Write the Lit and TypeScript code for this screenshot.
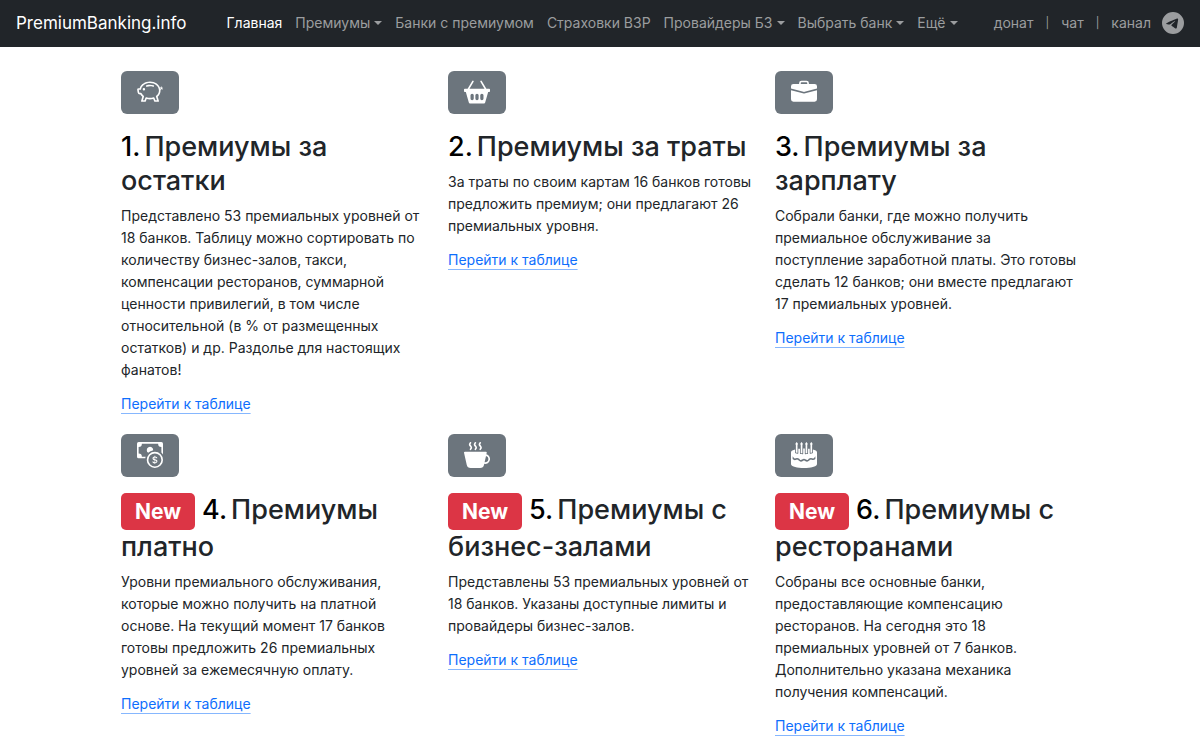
import { LitElement, html, css, svg } from "lit";
import { customElement, property } from "lit/decorators.js";

const steam =
  "m4.4.8-.003.004-.014.019a4.167 4.167 0 0 0-.204.31 2.327 2.327 0 0 0-.141.267c-.026.06-.034.092-.037.103v.004a.593.593 0 0 0 .091.248c.075.133.178.272.308.445l.01.012c.118.158.26.347.37.543.112.2.22.455.22.745 0 .188-.065.368-.119.494a3.31 3.31 0 0 1-.202.388 5.444 5.444 0 0 1-.253.382l-.018.025-.005.008-.002.002A.5.5 0 0 1 3.6 4.2l.003-.004.014-.019a4.149 4.149 0 0 0 .204-.31 2.06 2.06 0 0 0 .141-.267c.026-.06.034-.092.037-.103a.593.593 0 0 0-.09-.252A4.334 4.334 0 0 0 3.6 2.8l-.01-.012a5.099 5.099 0 0 1-.37-.543A1.53 1.53 0 0 1 3 1.5c0-.188.065-.368.119-.494.059-.138.134-.274.202-.388a5.446 5.446 0 0 1 .253-.382l.025-.035A.5.5 0 0 1 4.4.8Z";

const icons = {
  piggy: svg`
    <path d="M5 6.25a.75.75 0 1 1-1.5 0 .75.75 0 0 1 1.5 0zm1.138-1.496A6.613 6.613 0 0 1 7.964 4.5c.666 0 1.303.097 1.893.273a.5.5 0 0 0 .286-.958A7.602 7.602 0 0 0 7.964 3.5c-.734 0-1.441.103-2.102.292a.5.5 0 1 0 .276.962z"/>
    <path fill-rule="evenodd" d="M7.964 1.527c-2.977 0-5.571 1.704-6.32 4.125h-.55A1 1 0 0 0 .11 6.824l.254 1.46a1.5 1.5 0 0 0 1.478 1.243h.263c.3.513.688.978 1.145 1.382l-.729 2.477a.5.5 0 0 0 .48.641h2a.5.5 0 0 0 .471-.332l.482-1.351c.635.173 1.31.267 2.011.267.707 0 1.388-.095 2.028-.272l.543 1.372a.5.5 0 0 0 .465.316h2a.5.5 0 0 0 .478-.645l-.761-2.506C13.81 9.895 14.5 8.559 14.5 7.069c0-.145-.007-.29-.02-.431.261-.11.508-.266.705-.444.315.306.815.306.815-.417 0 .223-.5.223-.461-.026a.95.95 0 0 0 .09-.255.7.7 0 0 0-.202-.645.58.58 0 0 0-.707-.098.735.735 0 0 0-.375.562c-.024.243.082.48.32.654a2.112 2.112 0 0 1-.259.153c-.534-2.664-3.284-4.595-6.442-4.595zM2.516 6.26c.455-2.066 2.667-3.733 5.448-3.733 3.146 0 5.536 2.114 5.536 4.542 0 1.254-.624 2.41-1.67 3.248a.5.5 0 0 0-.165.535l.66 2.175h-.985l-.59-1.487a.5.5 0 0 0-.629-.288c-.661.23-1.39.359-2.157.359a6.558 6.558 0 0 1-2.157-.359.5.5 0 0 0-.635.304l-.525 1.471h-.979l.633-2.15a.5.5 0 0 0-.17-.534 4.649 4.649 0 0 1-1.284-1.541.5.5 0 0 0-.446-.275h-.56a.5.5 0 0 1-.492-.414l-.254-1.46h.933a.5.5 0 0 0 .488-.393zm12.621-.857a.565.565 0 0 1-.098.21.704.704 0 0 1-.044-.025c-.146-.09-.157-.175-.152-.223a.236.236 0 0 1 .117-.173c.049-.027.08-.021.113.012a.202.202 0 0 1 .064.199z"/>`,
  basket: svg`
    <path d="M5.929 1.757a.5.5 0 1 0-.858-.514L2.217 6H.5a.5.5 0 0 0-.5.5v1a.5.5 0 0 0 .5.5h.623l1.844 6.456A.75.75 0 0 0 3.69 15h8.622a.75.75 0 0 0 .722-.544L14.877 8h.623a.5.5 0 0 0 .5-.5v-1a.5.5 0 0 0-.5-.5h-1.717L10.93 1.243a.5.5 0 1 0-.858.514L12.617 6H3.383L5.93 1.757zM4 10a1 1 0 0 1 2 0v2a1 1 0 1 1-2 0v-2zm3 0a1 1 0 0 1 2 0v2a1 1 0 1 1-2 0v-2zm4-1a1 1 0 0 1 1 1v2a1 1 0 1 1-2 0v-2a1 1 0 0 1 1-1z"/>`,
  briefcase: svg`
    <path d="M6.5 1A1.5 1.5 0 0 0 5 2.5V3H1.5A1.5 1.5 0 0 0 0 4.5v1.384l7.614 2.03a1.5 1.5 0 0 0 .772 0L16 5.884V4.5A1.5 1.5 0 0 0 14.5 3H11v-.5A1.5 1.5 0 0 0 9.5 1h-3zm0 1h3a.5.5 0 0 1 .5.5V3H6v-.5a.5.5 0 0 1 .5-.5z"/>
    <path d="M0 12.5A1.5 1.5 0 0 0 1.5 14h13a1.5 1.5 0 0 0 1.5-1.5V6.85L8.129 8.947a.5.5 0 0 1-.258 0L0 6.85v5.65z"/>`,
  cash: svg`
    <path fill-rule="evenodd" d="M11 15a4 4 0 1 0 0-8 4 4 0 0 0 0 8zm5-4a5 5 0 1 1-10 0 5 5 0 0 1 10 0z"/>
    <path d="M9.438 11.944c.047.596.518 1.06 1.363 1.116v.44h.375v-.443c.875-.061 1.386-.529 1.386-1.207 0-.618-.39-.936-1.09-1.1l-.296-.07v-1.2c.376.043.614.248.671.532h.658c-.047-.575-.54-1.024-1.329-1.073V8.5h-.375v.45c-.747.073-1.255.522-1.255 1.158 0 .562.378.92 1.007 1.066l.248.061v1.272c-.384-.058-.639-.27-.696-.563h-.668zm1.36-1.354c-.369-.085-.569-.26-.569-.522 0-.294.216-.514.572-.578v1.1h-.003zm.432.746c.449.104.655.272.655.569 0 .339-.257.571-.709.614v-1.195l.054.012z"/>
    <path d="M1 0a1 1 0 0 0-1 1v8a1 1 0 0 0 1 1h4.083c.058-.344.145-.678.258-1H3a2 2 0 0 0-2-2V3a2 2 0 0 0 2-2h10a2 2 0 0 0 2 2v3.528c.38.34.717.728 1 1.154V1a1 1 0 0 0-1-1H1z"/>
    <path d="M9.998 5.083 10 5a2 2 0 1 0-3.132 1.65 5.982 5.982 0 0 1 3.13-1.567z"/>`,
  cup: svg`
    <path fill-rule="evenodd" d="M.5 6a.5.5 0 0 0-.488.608l1.652 7.434A2.5 2.5 0 0 0 4.104 16h5.792a2.5 2.5 0 0 0 2.44-1.958l.131-.59a3 3 0 0 0 1.3-5.854l.221-.99A.5.5 0 0 0 13.5 6H.5ZM13 12.5a2.01 2.01 0 0 1-.316-.025l.867-3.898A2.001 2.001 0 0 1 13 12.5Z"/>
    <path d=${steam} />
    <path d=${steam} transform="translate(3 0)" />
    <path d=${steam} transform="translate(6 0)" />`,
  cake: svg`
    <path d="m2.899.804.595-.792.598.79A.747.747 0 0 1 4 1.806v4.886c-.354-.06-.689-.127-1-.201V1.813a.747.747 0 0 1-.1-1.01ZM13 1.806v4.685a15.19 15.19 0 0 1-1 .201v-4.88a.747.747 0 0 1-.1-1.007l.595-.792.598.79A.746.746 0 0 1 13 1.806Zm-3 0a.746.746 0 0 0 .092-1.004l-.598-.79-.595.792A.747.747 0 0 0 9 1.813v5.17c.341-.013.675-.031 1-.055V1.806Zm-3 0v5.176c-.341-.012-.675-.03-1-.054V1.813a.747.747 0 0 1-.1-1.01l.595-.79.598.789A.747.747 0 0 1 7 1.806Z"/>
    <path d="M4.5 6.988V4.226a22.6 22.6 0 0 1 1-.114V7.16c0 .131.101.24.232.25l.231.017c.332.024.672.043 1.02.055l.258.01a.25.25 0 0 0 .26-.25V4.003a29.015 29.015 0 0 1 1 0V7.24a.25.25 0 0 0 .258.25l.259-.009c.347-.012.687-.03 1.019-.055l.231-.017a.25.25 0 0 0 .232-.25V4.112c.345.031.679.07 1 .114v2.762a.25.25 0 0 0 .292.246l.291-.049c.364-.061.71-.13 1.033-.208l.192-.046a.25.25 0 0 0 .192-.243V4.621c.672.184 1.251.409 1.677.678.415.261.823.655.823 1.2V13.5c0 .546-.408.94-.823 1.201-.44.278-1.043.51-1.745.696-1.41.376-3.33.603-5.432.603-2.102 0-4.022-.227-5.432-.603-.702-.187-1.305-.418-1.745-.696C.408 14.44 0 14.046 0 13.5v-7c0-.546.408-.94.823-1.201.426-.269 1.005-.494 1.677-.678v2.067c0 .116.08.216.192.243l.192.046c.323.077.669.147 1.033.208l.292.05a.25.25 0 0 0 .291-.247ZM1 8.82v1.659a1.935 1.935 0 0 0 2.298.43.935.935 0 0 1 1.08.175l.348.349a2 2 0 0 0 2.615.185l.059-.044a1 1 0 0 1 1.2 0l.06.044a2 2 0 0 0 2.613-.185l.348-.348a.938.938 0 0 1 1.082-.175c.781.39 1.718.208 2.297-.426V8.833l-.68.907a.938.938 0 0 1-1.17.276 1.938 1.938 0 0 0-2.236.363l-.348.348a1 1 0 0 1-1.307.092l-.06-.044a2 2 0 0 0-2.399 0l-.06.044a1 1 0 0 1-1.306-.092l-.35-.35a1.935 1.935 0 0 0-2.233-.362.935.935 0 0 1-1.168-.277L1 8.82Z"/>`,
  telegram: svg`
    <path d="M16 8A8 8 0 1 1 0 8a8 8 0 0 1 16 0zM8.287 5.906c-.778.324-2.334.994-4.666 2.01-.378.15-.577.298-.595.442-.03.243.275.339.69.47l.175.055c.408.133.958.288 1.243.294.26.006.549-.1.868-.32 2.179-1.471 3.304-2.214 3.374-2.23.05-.012.12-.026.166.016.047.041.042.12.037.141-.03.129-1.227 1.241-1.846 1.817-.193.18-.33.307-.358.336a8.154 8.154 0 0 1-.188.186c-.38.366-.664.64.015 1.088.327.216.589.393.85.571.284.194.568.387.936.629.093.06.183.125.27.187.331.236.63.448.997.414.214-.02.435-.22.547-.82.265-1.417.786-4.486.906-5.751a1.426 1.426 0 0 0-.013-.315.337.337 0 0 0-.114-.217.526.526 0 0 0-.31-.093c-.3.005-.763.166-2.984 1.09z"/>`,
};

type IconName = keyof typeof icons;

interface Feature {
  icon: IconName;
  title: string;
  text: string;
  isNew?: boolean;
}

const features: Feature[] = [
  {
    icon: "piggy",
    title: "Премиумы за остатки",
    text: "Представлено 53 премиальных уровней от 18 банков. Таблицу можно сортировать по количеству бизнес-залов, такси, компенсации ресторанов, суммарной ценности привилегий, в том числе относительной (в % от размещенных остатков) и др. Раздолье для настоящих фанатов!",
  },
  {
    icon: "basket",
    title: "Премиумы за траты",
    text: "За траты по своим картам 16 банков готовы предложить премиум; они предлагают 26 премиальных уровня.",
  },
  {
    icon: "briefcase",
    title: "Премиумы за зарплату",
    text: "Собрали банки, где можно получить премиальное обслуживание за поступление заработной платы. Это готовы сделать 12 банков; они вместе предлагают 17 премиальных уровней.",
  },
  {
    icon: "cash",
    title: "Премиумы платно",
    text: "Уровни премиального обслуживания, которые можно получить на платной основе. На текущий момент 17 банков готовы предложить 26 премиальных уровней за ежемесячную оплату.",
    isNew: true,
  },
  {
    icon: "cup",
    title: "Премиумы с бизнес-залами",
    text: "Представлены 53 премиальных уровней от 18 банков. Указаны доступные лимиты и провайдеры бизнес-залов.",
    isNew: true,
  },
  {
    icon: "cake",
    title: "Премиумы с ресторанами",
    text: "Собраны все основные банки, предоставляющие компенсацию ресторанов. На сегодня это 18 премиальных уровней от 7 банков. Дополнительно указана механика получения компенсаций.",
    isNew: true,
  },
];

const menu = [
  { label: "Премиумы", dropdown: true },
  { label: "Банки с премиумом", dropdown: false },
  { label: "Страховки ВЗР", dropdown: false },
  { label: "Провайдеры БЗ", dropdown: true },
  { label: "Выбрать банк", dropdown: true },
  { label: "Ещё", dropdown: true },
];

@customElement("site-nav")
export class SiteNav extends LitElement {
  static styles = css`
    :host {
      display: block;
      background: #212529;
      color: #9b9d9f;
      font-size: 14px;
      line-height: 22px;
    }
    .bar {
      display: flex;
      align-items: center;
      min-height: 47px;
      padding: 0 16px 2px;
      box-sizing: border-box;
      white-space: nowrap;
    }
    .brand {
      margin-right: 40px;
      color: #fff;
      font-size: 17px;
      text-decoration: none;
    }
    .menu,
    .aside {
      display: flex;
      align-items: center;
      gap: 13px;
      margin: 0;
      padding: 0;
      list-style: none;
    }
    .aside {
      gap: 12px;
      margin-left: auto;
    }
    .item {
      display: flex;
      align-items: center;
      padding: 0;
      border: 0;
      background: none;
      color: inherit;
      font: inherit;
      text-decoration: none;
      cursor: pointer;
    }
    .active {
      color: #fff;
    }
    .toggle::after {
      content: "";
      margin-left: 4px;
      border: 4px solid transparent;
      border-top-color: currentColor;
      border-bottom: 0;
    }
    .divider {
      font-size: 11px;
    }
    .telegram {
      width: 22px;
      height: 22px;
      margin-left: 11px;
      fill: currentColor;
    }
  `;

  render() {
    return html`
      <nav class="bar">
        <a class="brand" href="#">PremiumBanking.info</a>
        <ul class="menu">
          <li><a class="item active" href="#">Главная</a></li>
          ${menu.map(
            (m) => html`<li>
              ${m.dropdown
                ? html`<button class="item toggle" type="button">${m.label}</button>`
                : html`<a class="item" href="#">${m.label}</a>`}
            </li>`
          )}
        </ul>
        <div class="aside">
          <a class="item" href="#">донат</a>
          <span class="divider">|</span>
          <a class="item" href="#">чат</a>
          <span class="divider">|</span>
          <a class="item" href="#">
            канал
            <svg class="telegram" viewBox="0 0 16 16" aria-hidden="true">${icons.telegram}</svg>
          </a>
        </div>
      </nav>
    `;
  }
}

@customElement("feature-card")
export class FeatureCard extends LitElement {
  @property({ attribute: false }) feature!: Feature;
  @property({ type: Number }) number = 1;

  static styles = css`
    :host {
      display: block;
      min-width: 0;
    }
    .tile {
      display: inline-flex;
      padding: 8px 16px 9px;
      border-radius: 6px;
      background: #6c757d;
      vertical-align: top;
    }
    .icon {
      width: 26px;
      height: 26px;
      fill: #fff;
    }
    .title {
      margin: 16px 0 7px;
      color: #212529;
      font-size: 27px;
      font-weight: 500;
      line-height: 34px;
    }
    .number {
      margin-right: 4px;
      color: #000;
    }
    .badge {
      display: inline-block;
      margin-right: 7px;
      padding: 7px 14px;
      border-radius: 5px;
      background: #dc3545;
      color: #fff;
      font-size: 21px;
      font-weight: 700;
      line-height: 23px;
      vertical-align: middle;
    }
    .text {
      margin: 0 0 12px;
    }
    .link {
      color: #0d6efd;
      text-decoration: underline 1px #86b7fe;
      text-decoration-skip-ink: none;
      text-underline-offset: 4px;
    }
  `;

  render() {
    const f = this.feature;
    const badge = f.isNew ? html`<span class="badge">New</span>` : "";
    return html`
      <div class="tile">
        <svg class="icon" viewBox="0 0 16 16" aria-hidden="true">${icons[f.icon]}</svg>
      </div>
      <h3 class="title">${badge}<span class="number">${`${this.number}.`}</span>${f.title}</h3>
      <p class="text">${f.text}</p>
      <a class="link" href="#">Перейти к таблице</a>
    `;
  }
}

@customElement("app-root")
export class AppRoot extends LitElement {
  static styles = css`
    :host {
      display: block;
      min-height: 100vh;
      background: #fff;
      color: #212529;
      font-family: Inter, "Liberation Sans", sans-serif;
      font-size: 14px;
      line-height: 22px;
    }
    .features {
      display: grid;
      grid-template-columns: repeat(3, minmax(0, 1fr));
      gap: 19px 23px;
      max-width: 958px;
      margin: 0 auto;
      padding: 24px 12px 0;
    }
  `;

  render() {
    return html`
      <site-nav></site-nav>
      <main class="features">
        ${features.map(
          (f, i) => html`<feature-card .feature=${f} .number=${i + 1}></feature-card>`
        )}
      </main>
    `;
  }
}
